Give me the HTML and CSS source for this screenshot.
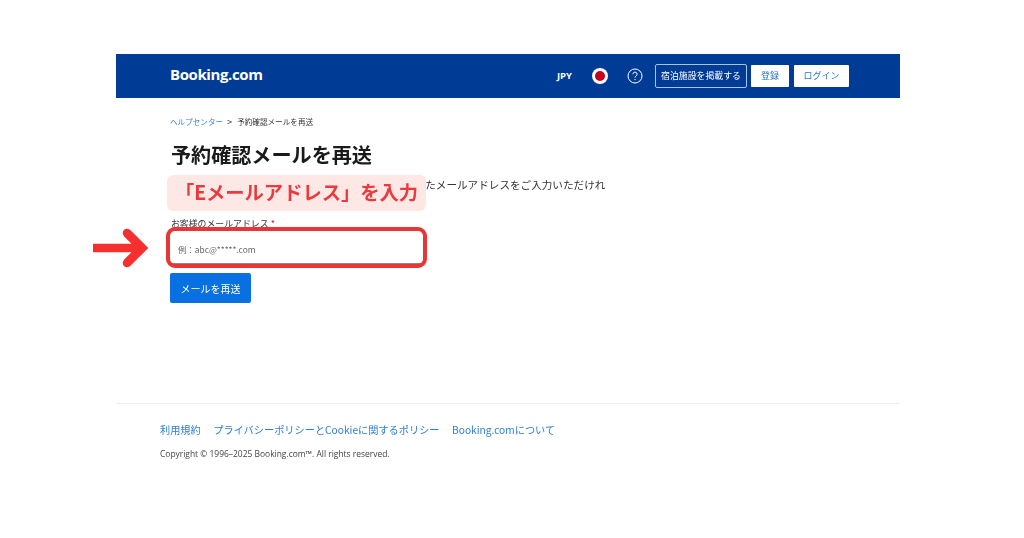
FILE: index.html
```html
<!DOCTYPE html>
<html lang="ja">
<head>
<meta charset="utf-8">
<title>予約確認メールを再送</title>
<link rel="stylesheet" href="styles.css">
</head>
<body>
<div class="page">
  <header class="topbar">
    <div class="logo">Booking.com</div>
    <div class="actions">
      <span class="currency">JPY</span>
      <span class="flag"><span class="flag-dot"></span></span>
      <svg class="help" width="16" height="16" viewBox="0 0 16 16" aria-hidden="true"><circle cx="8" cy="8" r="7" fill="none" stroke="#fff" stroke-width="1"/><path d="M5.9 6.2a2.1 2.1 0 1 1 3.2 1.8c-.7.4-1.1.8-1.1 1.6" fill="none" stroke="#fff" stroke-width="1"/><circle cx="8" cy="11.6" r=".7" fill="#fff"/></svg>
      <span class="list-btn">宿泊施設を掲載する</span>
      <span class="btn-white btn-register">登録</span>
      <span class="btn-white btn-login">ログイン</span>
    </div>
  </header>
  <main class="content">
    <nav class="crumbs"><a class="crumb-link">ヘルプセンター</a><span class="crumb-sep">&gt;</span><span>予約確認メールを再送</span></nav>
    <h1 class="title">予約確認メールを再送</h1>
    <p class="lead">予約確認メールを再送するには、ご予約時に使用されたメールアドレスをご入力いただけれ</p>
    <label class="field-label">お客様のメールアドレス <span class="req">*</span></label>
    <div class="input">例：abc@*****.com</div>
    <button class="submit" type="button">メールを再送</button>
  </main>
  <footer class="foot">
    <div class="foot-links"><a>利用規約</a><a>プライバシーポリシーとCookieに関するポリシー</a><a>Booking.comについて</a></div>
    <p class="copy">Copyright © 1996–2025 Booking.com™. All rights reserved.</p>
  </footer>
</div>
<div class="callout">「Eメールアドレス」を入力</div>
<div class="ring"></div>
<svg class="arrow" width="60" height="46" viewBox="0 0 60 46" aria-hidden="true"><path d="M0 22H48M34 7L49 22L34 37" fill="none" stroke="#f5302f" stroke-width="8.5" stroke-linejoin="miter"/><path d="M34 7L49 22L34 37" fill="none" stroke="#f5302f" stroke-width="8.5" stroke-linecap="round"/></svg>
</body>
</html>
```
FILE: styles.css
```css
* { box-sizing: border-box; }
html, body { margin: 0; background: #fff; }
body { position: relative; height: 538px; overflow: hidden; font-family: "Noto Sans CJK JP", "Noto Sans", sans-serif; color: #1a1a1a; }
.page { width: 784px; margin-left: 116px; padding-top: 54px; filter: blur(0.35px); }
.topbar { height: 44px; background: #003b95; color: #fff; display: flex; align-items: center; justify-content: space-between; padding: 0 51px 0 54px; }
.logo { font-family: "Open Sans", sans-serif; font-weight: 700; font-size: 15px; letter-spacing: -0.4px; margin-bottom: 4px; }
.actions { display: flex; align-items: center; margin-bottom: 1px; }
.currency { font-family: "Open Sans", sans-serif; font-size: 9.5px; font-weight: 700; margin-right: 20px; }
.flag { width: 16px; height: 16px; border-radius: 50%; background: #fff; display: flex; align-items: center; justify-content: center; margin-right: 19px; }
.flag-dot { width: 10px; height: 10px; border-radius: 50%; background: #c8001f; }
.help { margin-right: 12px; }
.list-btn { width: 92px; height: 24px; border: 1px solid #a9c4e4; border-radius: 2px; font-size: 8.9px; display: flex; align-items: center; justify-content: center; margin-right: 4px; }
.btn-white { height: 22px; background: #fff; color: #2a76c6; border-radius: 1px; font-size: 9px; display: flex; align-items: center; justify-content: center; }
.btn-register { width: 38px; margin-right: 5px; }
.btn-login { width: 55px; }
.content { padding: 18px 0 0 54px; height: 306px; border-bottom: 1px solid #eeeeee; }
.crumbs { font-size: 7.6px; line-height: 12px; height: 12px; display: flex; align-items: center; color: #333; }
.crumb-link { color: #3d84cc; }
.crumb-sep { margin: 0 5px 0 4px; font-size: 9px; }
.title { margin: 12px 0 0 1px; font-size: 20.1px; line-height: 30px; font-weight: 700; }
.lead { margin: 7px 0 0 1px; font-size: 10.6px; line-height: 16px; color: #333; white-space: nowrap; }
.field-label { display: block; margin: 24px 0 0 1px; font-size: 8.9px; line-height: 14px; color: #333; }
.req { color: #d4111e; }
.input { margin-top: 2px; width: 252px; height: 31px; border-bottom: 1px solid #8a8a8a; padding-left: 8px; font-size: 8.4px; line-height: 32px; color: #666; }
.submit { display: block; margin-top: 9px; width: 81px; height: 30px; border: 0; border-radius: 2px; padding: 0; background: #0870e0; color: #fff; font: 10px "Noto Sans CJK JP", sans-serif; }
.foot { padding: 18px 0 0 44px; }
.foot-links { display: flex; gap: 12.5px; font-size: 10.2px; line-height: 16px; }
.foot-links a { color: #2f7fcf; }
.copy { margin: 10px 0 0; font-family: "Open Sans", sans-serif; font-size: 8.45px; line-height: 12px; color: #444; }
.callout { position: absolute; left: 167px; top: 175px; width: 259px; height: 36px; border-radius: 6px; background: #fde8e6; color: #ec3a3c; font-size: 19.3px; font-weight: 700; line-height: 35px; text-align: center; filter: blur(0.3px); }
.ring { position: absolute; left: 166px; top: 227px; width: 261px; height: 41px; border: 4px solid #e83535; border-radius: 9px; }
.arrow { position: absolute; left: 93px; top: 226px; }
```
